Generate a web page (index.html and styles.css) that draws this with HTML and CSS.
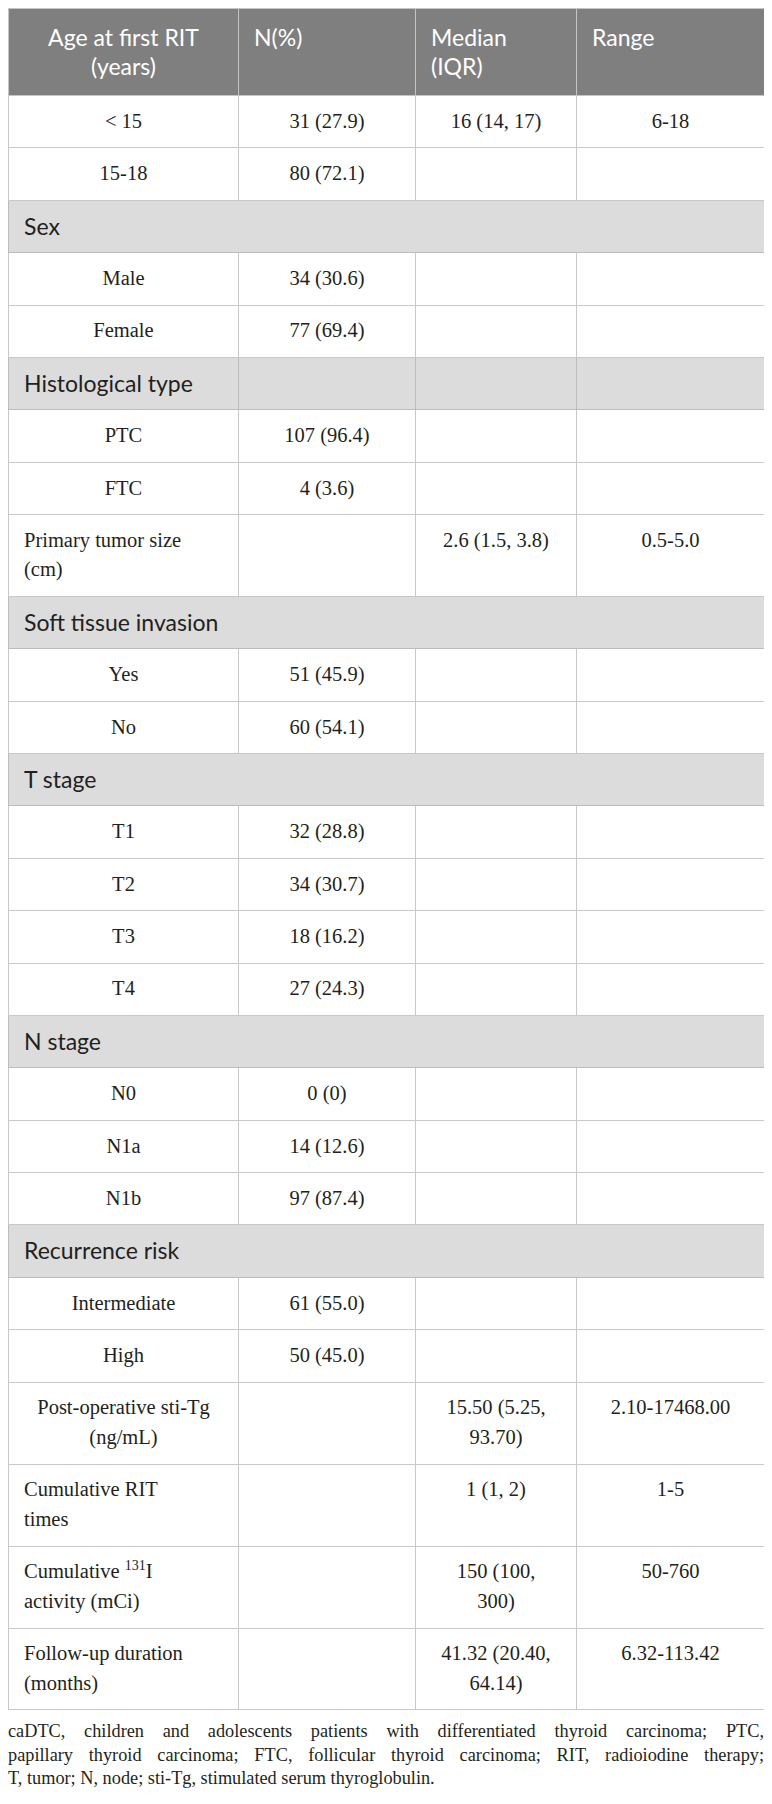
FILE: index.html
```html
<!DOCTYPE html>
<html>
<head>
<meta charset="utf-8">
<link rel="stylesheet" href="styles.css">
</head>
<body>
<table class="data">
  <colgroup>
    <col class="c1"><col class="c2"><col class="c3"><col class="c4">
  </colgroup>
  <thead>
    <tr>
      <th class="center">Age at first RIT<br>(years)</th>
      <th>N(%)</th>
      <th>Median<br>(IQR)</th>
      <th>Range</th>
    </tr>
  </thead>
  <tbody>
    <tr><td class="center">&lt; 15</td><td class="center">31 (27.9)</td><td class="center">16 (14, 17)</td><td class="center">6-18</td></tr>
    <tr><td class="center">15-18</td><td class="center">80 (72.1)</td><td></td><td></td></tr>
    <tr class="cat"><td colspan="4">Sex</td></tr>
    <tr><td class="center">Male</td><td class="center">34 (30.6)</td><td></td><td></td></tr>
    <tr><td class="center">Female</td><td class="center">77 (69.4)</td><td></td><td></td></tr>
    <tr class="cat"><td>Histological type</td><td></td><td></td><td></td></tr>
    <tr><td class="center">PTC</td><td class="center">107 (96.4)</td><td></td><td></td></tr>
    <tr><td class="center">FTC</td><td class="center">4 (3.6)</td><td></td><td></td></tr>
    <tr><td>Primary tumor size<br>(cm)</td><td></td><td class="center">2.6 (1.5, 3.8)</td><td class="center">0.5-5.0</td></tr>
    <tr class="cat"><td colspan="4">Soft tissue invasion</td></tr>
    <tr><td class="center">Yes</td><td class="center">51 (45.9)</td><td></td><td></td></tr>
    <tr><td class="center">No</td><td class="center">60 (54.1)</td><td></td><td></td></tr>
    <tr class="cat"><td colspan="4">T stage</td></tr>
    <tr><td class="center">T1</td><td class="center">32 (28.8)</td><td></td><td></td></tr>
    <tr><td class="center">T2</td><td class="center">34 (30.7)</td><td></td><td></td></tr>
    <tr><td class="center">T3</td><td class="center">18 (16.2)</td><td></td><td></td></tr>
    <tr><td class="center">T4</td><td class="center">27 (24.3)</td><td></td><td></td></tr>
    <tr class="cat"><td colspan="4">N stage</td></tr>
    <tr><td class="center">N0</td><td class="center">0 (0)</td><td></td><td></td></tr>
    <tr><td class="center">N1a</td><td class="center">14 (12.6)</td><td></td><td></td></tr>
    <tr><td class="center">N1b</td><td class="center">97 (87.4)</td><td></td><td></td></tr>
    <tr class="cat"><td colspan="4">Recurrence risk</td></tr>
    <tr><td class="center">Intermediate</td><td class="center">61 (55.0)</td><td></td><td></td></tr>
    <tr><td class="center">High</td><td class="center">50 (45.0)</td><td></td><td></td></tr>
    <tr><td class="center">Post-operative sti-Tg<br>(ng/mL)</td><td></td><td class="center">15.50 (5.25,<br>93.70)</td><td class="center">2.10-17468.00</td></tr>
    <tr><td>Cumulative RIT<br>times</td><td></td><td class="center">1 (1, 2)</td><td class="center">1-5</td></tr>
    <tr><td>Cumulative <sup>131</sup>I<br>activity (mCi)</td><td></td><td class="center">150 (100,<br>300)</td><td class="center">50-760</td></tr>
    <tr><td>Follow-up duration<br>(months)</td><td></td><td class="center">41.32 (20.40,<br>64.14)</td><td class="center">6.32-113.42</td></tr>
  </tbody>
</table>
<div class="note">
  <span class="line just">caDTC, children and adolescents patients with differentiated thyroid carcinoma; PTC,</span>
  <span class="line just">papillary thyroid carcinoma; FTC, follicular thyroid carcinoma; RIT, radioiodine therapy;</span>
  <span class="line">T, tumor; N, node; sti-Tg, stimulated serum thyroglobulin.</span>
</div>
</body>
</html>
```

FILE: styles.css
```css
html, body {
  background: #ffffff;
}
body {
  margin: 8px;
  color: #231f20;
  font-family: "Liberation Serif", "Times New Roman", serif;
}
.data {
  width: 756px;
  border-collapse: collapse;
  table-layout: fixed;
}
.c1 { width: 230px; }
.c2 { width: 177px; }
.c3 { width: 161px; }
.c4 { width: 188px; }

.data th {
  background: #7f7f7f;
  color: #ffffff;
  font-family: Lato, "Open Sans", sans-serif;
  font-weight: normal;
  font-size: 23px;
  line-height: 29.5px;
  padding: 13.5px 15px;
  text-align: left;
  vertical-align: top;
  border: 1px solid #c4c4c4;
}
.data td {
  font-size: 20.5px;
  line-height: 29.6px;
  padding: 10.9px 15px;
  text-align: left;
  vertical-align: top;
  border: 1px solid #c8c8c8;
}
.data .center {
  text-align: center;
}
.data .cat td {
  background: #dcdcdc;
  font-family: Lato, "Open Sans", sans-serif;
  font-size: 23px;
  border-color: #bcbcbc;
}
.data sup {
  font-size: 14px;
  line-height: 0;
  vertical-align: 8px;
}
.note {
  margin-top: 10px;
  font-size: 18.3px;
  line-height: 23.5px;
}
.line {
  display: block;
}
.just {
  text-align: justify;
  text-align-last: justify;
}
```
